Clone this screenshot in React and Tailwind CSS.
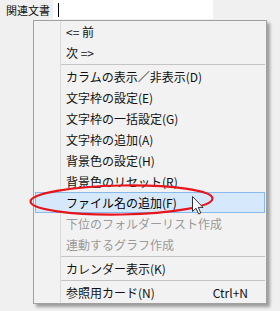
import React from "react";

const items = [
  { label: "<= 前" },
  { label: "次 =>" },
  { sep: true },
  { label: "カラムの表示／非表示(D)" },
  { label: "文字枠の設定(E)" },
  { label: "文字枠の一括設定(G)" },
  { label: "文字枠の追加(A)" },
  { label: "背景色の設定(H)" },
  { label: "背景色のリセット(R)" },
  { label: "ファイル名の追加(F)", active: true },
  { label: "下位のフォルダーリスト作成", disabled: true },
  { label: "連動するグラフ作成", disabled: true },
  { sep: true },
  { label: "カレンダー表示(K)" },
  { sep: true },
  { label: "参照用カード(N)", shortcut: "Ctrl+N" },
];

const MenuRow = ({ item }) => {
  if (item.sep) {
    return (
      <div className="flex h-[3px]">
        <div className="w-[27px] border-r border-[#dadada] shrink-0"></div>
        <div className="flex-1 flex items-center mr-[1px]">
          <div className="h-px w-full bg-[#c4c4c4]"></div>
        </div>
      </div>
    );
  }

  if (item.active) {
    return (
      <div className="flex h-[21px] mx-[1px] bg-[#d6e8fb] border border-[#86b9ec]">
        <div className="w-[25px] shrink-0"></div>
        <div className="flex-1 pl-[5px] leading-[19px] text-black">{item.label}</div>
      </div>
    );
  }

  return (
    <div className="flex h-[21px]">
      <div className="w-[27px] border-r border-[#dadada] shrink-0"></div>
      <div
        className={`flex-1 flex justify-between pl-[5px] pr-[18px] leading-[21px] ${
          item.disabled ? "text-[#9a9a9a]" : "text-[#111]"
        }`}
      >
        <span>{item.label}</span>
        {item.shortcut && <span>{item.shortcut}</span>}
      </div>
    </div>
  );
};

export default function App() {
  return (
    <div
      className="relative w-[280px] h-[311px] overflow-hidden bg-[#f0f0f0] text-[12px]"
      style={{ fontFamily: '"Noto Sans CJK JP", "Noto Sans", sans-serif' }}
    >
      {/* top field */}
      <div className="flex h-[20px]">
        <div className="w-[53px] pl-[6px] text-[11px] leading-[20px] text-[#111]">関連文書</div>
        <div className="w-[160px] h-[19px] bg-white flex items-center pl-[5px]">
          <div className="w-px h-[14px] bg-black"></div>
        </div>
      </div>

      {/* context menu */}
      <div className="ml-[33px] w-[234px] h-[284px] bg-[#f2f2f2] border border-[#a0a0a0] shadow-[3px_3px_3px_rgba(0,0,0,0.35)]">
        {items.map((item, i) => (
          <MenuRow key={i} item={item} />
        ))}
      </div>

      {/* red annotation ellipse */}
      <svg className="absolute left-0 top-0 pointer-events-none" width="280" height="311">
        <ellipse
          cx="121.5"
          cy="200"
          rx="91"
          ry="14.5"
          fill="none"
          stroke="#e8141b"
          strokeWidth="2.2"
          transform="rotate(-1 121.5 200)"
        />
      </svg>

      {/* mouse cursor */}
      <svg className="absolute left-[192px] top-[196px] pointer-events-none" width="13" height="19" viewBox="0 0 13 19">
        <path
          d="M0.5 0.5 L0.5 15.5 L4 12.2 L6.6 18 L8.8 17 L6.3 11.4 L11 11.4 Z"
          fill="#fff"
          stroke="#333"
          strokeWidth="1"
          strokeLinejoin="round"
        />
      </svg>
    </div>
  );
}
